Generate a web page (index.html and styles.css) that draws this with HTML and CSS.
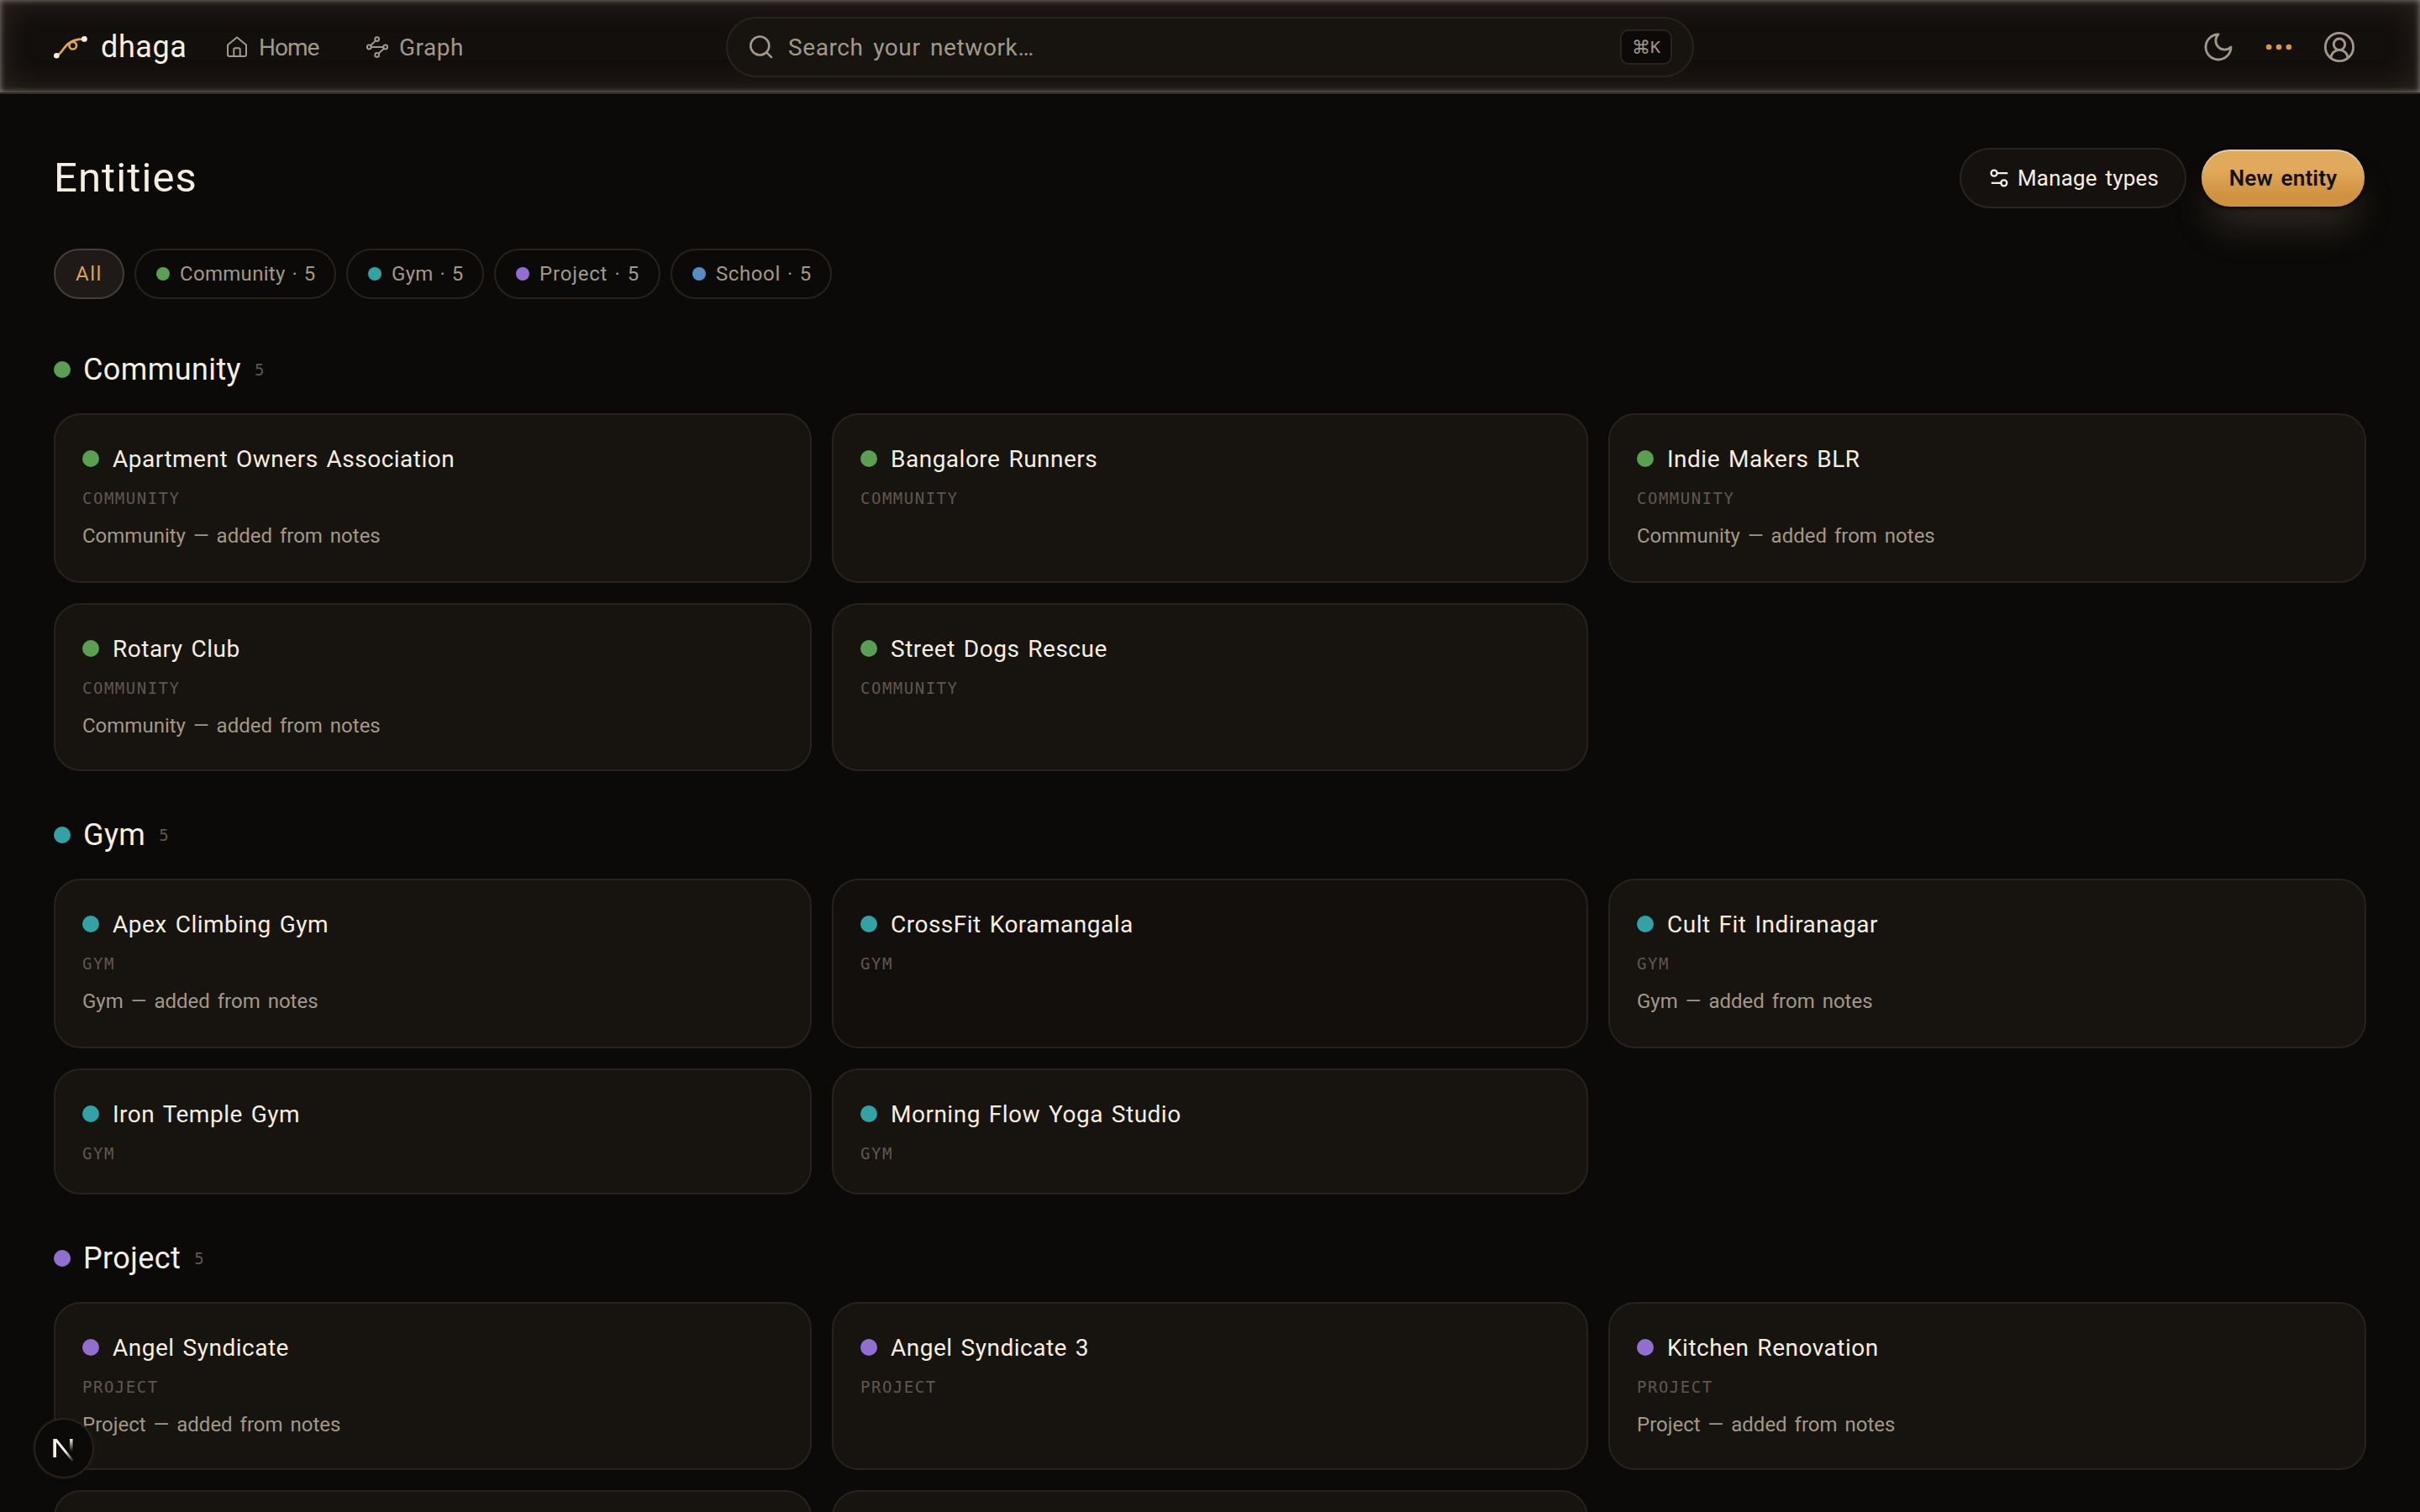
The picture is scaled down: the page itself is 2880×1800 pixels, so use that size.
FILE: index.html
```
<!DOCTYPE html>
<html lang="en">
<head>
    <meta charset="UTF-8">
    <meta name="viewport" content="width=device-width, initial-scale=1.0">
    <title>Entities | dhaga</title>
    <link rel="stylesheet" href="styles.css">
</head>
<body>
    <!-- Top bar -->
    <header class="topbar">
        <div class="topbar-left">
            <a class="brand" href="#">
                <svg class="brand-mark" viewBox="0 0 40 28" fill="none">
                    <path d="M4 24C12 21 12 5 34 4.6" stroke="#e0a552" stroke-width="2.7"/>
                    <circle cx="22.7" cy="12.2" r="4.3" stroke="#e0a552" stroke-width="2.7"/>
                    <circle cx="3.3" cy="24.3" r="3.3" fill="#f5eee1"/>
                    <circle cx="36.4" cy="4.4" r="3.4" fill="#f5eee1"/>
                </svg>
                <span>dhaga</span>
            </a>
            <nav>
                <a class="nav-home" href="#">
                    <svg class="icon-nav" viewBox="0 0 28 28">
                        <path d="M3 11.5 14 2.5l11 9V23a2 2 0 0 1-2 2H5a2 2 0 0 1-2-2Z"/>
                        <path d="M10.3 25V17a1.8 1.8 0 0 1 1.8-1.8h3.8A1.8 1.8 0 0 1 17.7 17v8"/>
                    </svg>
                    <span>Home</span>
                </a>
                <a class="nav-graph" href="#">
                    <svg class="icon-nav" viewBox="0 0 28 28">
                        <circle cx="13.7" cy="4.6" r="2.4"/>
                        <circle cx="4.3" cy="14" r="2.4"/>
                        <circle cx="23.7" cy="14" r="2.4"/>
                        <circle cx="13.7" cy="23.4" r="2.4"/>
                        <path d="M12 6.4 6 12.2M6.7 14h14.6M22 15.8l-6.5 5.9"/>
                    </svg>
                    <span>Graph</span>
                </a>
            </nav>
        </div>

        <div class="search">
            <svg class="icon-search" viewBox="0 0 32 32">
                <circle cx="14.3" cy="14.5" r="11"/>
                <path d="m22.5 22.7 5.5 5.5"/>
            </svg>
            <span class="search-text">Search your network…</span>
            <kbd><span class="cmd">⌘</span>K</kbd>
        </div>

        <div class="topbar-right">
            <button class="icon-btn" aria-label="Theme">
                <svg viewBox="0 0 24 24"><path d="M12 3a6 6 0 0 0 9 9 9 9 0 1 1-9-9Z"/></svg>
            </button>
            <button class="icon-btn more" aria-label="More">
                <svg viewBox="0 0 24 24"><circle cx="4.9" cy="12" r="2"/><circle cx="12" cy="12" r="2"/><circle cx="19.1" cy="12" r="2"/></svg>
            </button>
            <button class="icon-btn" aria-label="Account">
                <svg viewBox="0 0 24 24"><path d="M18 20a6 6 0 0 0-12 0"/><circle cx="12" cy="10" r="4"/><circle cx="12" cy="12" r="10"/></svg>
            </button>
        </div>
    </header>

    <main>
        <div class="page-head">
            <h1>Entities</h1>
            <div class="actions">
                <button class="btn-manage">
                    <svg viewBox="0 0 24 24"><path d="M20 7h-9M14 17H5"/><circle cx="17" cy="17" r="3"/><circle cx="7" cy="7" r="3"/></svg>
                    <span>Manage types</span>
                </button>
                <button class="btn-new">New entity</button>
            </div>
        </div>

        <!-- Type filters -->
        <div class="chips">
            <button class="chip active">All</button>
            <button class="chip chip-community"><i class="dot green"></i>Community · 5</button>
            <button class="chip chip-gym"><i class="dot teal"></i>Gym · 5</button>
            <button class="chip chip-project"><i class="dot purple"></i>Project · 5</button>
            <button class="chip chip-school"><i class="dot blue"></i>School · 5</button>
        </div>

        <section>
            <div class="section-head"><i class="dot green"></i><h2>Community</h2><span class="count">5</span></div>
            <div class="grid grid-community">
                <article class="card">
                    <h3><i class="dot green"></i>Apartment Owners Association</h3>
                    <div class="type">Community</div>
                    <p>Community — added from notes</p>
                </article>
                <article class="card">
                    <h3><i class="dot green"></i>Bangalore Runners</h3>
                    <div class="type">Community</div>
                </article>
                <article class="card">
                    <h3><i class="dot green"></i>Indie Makers BLR</h3>
                    <div class="type">Community</div>
                    <p>Community — added from notes</p>
                </article>
                <article class="card">
                    <h3><i class="dot green"></i>Rotary Club</h3>
                    <div class="type">Community</div>
                    <p>Community — added from notes</p>
                </article>
                <article class="card">
                    <h3><i class="dot green"></i>Street Dogs Rescue</h3>
                    <div class="type">Community</div>
                </article>
            </div>
        </section>

        <section>
            <div class="section-head"><i class="dot teal"></i><h2>Gym</h2><span class="count">5</span></div>
            <div class="grid grid-gym">
                <article class="card">
                    <h3><i class="dot teal"></i>Apex Climbing Gym</h3>
                    <div class="type">Gym</div>
                    <p>Gym — added from notes</p>
                </article>
                <article class="card dim">
                    <h3><i class="dot teal"></i>CrossFit Koramangala</h3>
                    <div class="type">Gym</div>
                </article>
                <article class="card">
                    <h3><i class="dot teal"></i>Cult Fit Indiranagar</h3>
                    <div class="type">Gym</div>
                    <p>Gym — added from notes</p>
                </article>
                <article class="card">
                    <h3><i class="dot teal"></i>Iron Temple Gym</h3>
                    <div class="type">Gym</div>
                </article>
                <article class="card">
                    <h3><i class="dot teal"></i>Morning Flow Yoga Studio</h3>
                    <div class="type">Gym</div>
                </article>
            </div>
        </section>

        <section>
            <div class="section-head"><i class="dot purple"></i><h2>Project</h2><span class="count">5</span></div>
            <div class="grid grid-project">
                <article class="card">
                    <h3><i class="dot purple"></i>Angel Syndicate</h3>
                    <div class="type">Project</div>
                    <p>Project — added from notes</p>
                </article>
                <article class="card">
                    <h3><i class="dot purple"></i>Angel Syndicate 3</h3>
                    <div class="type">Project</div>
                </article>
                <article class="card">
                    <h3><i class="dot purple"></i>Kitchen Renovation</h3>
                    <div class="type">Project</div>
                    <p>Project — added from notes</p>
                </article>
                <article class="card"></article>
                <article class="card"></article>
            </div>
        </section>
    </main>

    <!-- Dev tools badge -->
    <div class="dev-badge">
        <svg viewBox="0 0 72 72" fill="none">
            <defs>
                <linearGradient id="fadeBar" x1="0" y1="25" x2="0" y2="40" gradientUnits="userSpaceOnUse">
                    <stop offset="0" stop-color="#f5eee1"/>
                    <stop offset="1" stop-color="#f5eee1" stop-opacity="0"/>
                </linearGradient>
                <linearGradient id="fadeLeg" x1="38" y1="40" x2="48" y2="52" gradientUnits="userSpaceOnUse">
                    <stop offset="0" stop-color="#f5eee1"/>
                    <stop offset="1" stop-color="#f5eee1" stop-opacity="0"/>
                </linearGradient>
            </defs>
            <path d="M23.3 25h4.4L48 50.5l-2.5 1.2L27 29v18h-3.7Z" fill="url(#fadeLeg)"/>
            <path d="M43 25h3.6v15H43Z" fill="url(#fadeBar)"/>
        </svg>
    </div>
</body>
</html>
```
FILE: styles.css
```
/* General Styling */
* {
    box-sizing: border-box;
}

body {
    margin: 0;
    height: 1800px;
    overflow: hidden;
    background: #0b0a08;
    color: #f5eee1;
    font-family: Roboto, 'Liberation Sans', sans-serif;
    font-size: 28px;
}

a {
    color: inherit;
    text-decoration: none;
}

button {
    font-family: inherit;
    cursor: pointer;
}

h1, h2, h3, p {
    margin: 0;
}

svg {
    display: block;
    flex: none;
}

/* Top bar */
.topbar {
    display: grid;
    grid-template-columns: 1fr 1152px 1fr;
    align-items: center;
    height: 112px;
    padding: 2px 64px 0;
    background: #130f0d;
    border-bottom: 2px solid #2f2820;
    box-shadow: inset 0 0 7px rgba(210, 200, 195, 0.6), inset 0 0 36px rgba(100, 88, 72, 0.4);
}

.topbar-left,
.topbar-right,
.brand,
nav,
nav a {
    display: flex;
    align-items: center;
}

.brand {
    gap: 16px;
    font-size: 36px;
    font-weight: 450;
}

.brand span {
    width: 102px;
    letter-spacing: 0.6px;
}

.brand-mark {
    width: 40px;
    height: 28px;
}

nav {
    margin-left: 46px;
    color: #a2988a;
}

nav a {
    gap: 12px;
}

.nav-home span {
    width: 73px;
    letter-spacing: -1px;
}

.nav-graph {
    margin-left: 54px;
}

.nav-graph span {
    letter-spacing: 0.5px;
}

.icon-nav {
    width: 28px;
    height: 28px;
    fill: none;
    stroke: currentColor;
    stroke-width: 2;
    stroke-linejoin: round;
}

.search {
    display: flex;
    align-items: center;
    height: 72px;
    padding: 0 24px;
    background: #17130e;
    border: 2px solid #29231c;
    border-radius: 36px;
    color: #a2988a;
}

.icon-search {
    width: 32px;
    height: 32px;
    margin-right: 16px;
    fill: none;
    stroke: currentColor;
    stroke-width: 2.6;
    stroke-linecap: round;
}

.search-text {
    flex: 1;
    letter-spacing: 0.6px;
    word-spacing: 4px;
}

kbd {
    display: flex;
    align-items: center;
    justify-content: center;
    width: 62px;
    height: 42px;
    background: #0b0a08;
    border: 2px solid #29231c;
    border-radius: 10px;
    font-family: 'DejaVu Sans Mono', monospace;
    font-size: 20px;
}

.cmd {
    font-family: 'DejaVu Sans', sans-serif;
    font-size: 22px;
}

.topbar-right {
    justify-content: flex-end;
    margin-right: -4px;
}

.icon-btn {
    display: grid;
    place-items: center;
    width: 72px;
    height: 72px;
    padding: 0;
    border: 0;
    background: none;
    color: #a2988a;
}

.icon-btn svg {
    width: 40px;
    height: 40px;
    fill: none;
    stroke: currentColor;
    stroke-width: 1.7;
    stroke-linejoin: round;
}

.icon-btn.more svg {
    fill: #d49a45;
    stroke: none;
}

/* Page head */
main {
    padding: 64px 64px 0;
}

.page-head {
    display: flex;
    justify-content: space-between;
    align-items: center;
    height: 72px;
}

h1 {
    padding-bottom: 2px;
    font-size: 49px;
    font-weight: 400;
    letter-spacing: 1.1px;
}

.actions {
    display: flex;
    align-items: center;
    gap: 18px;
    margin-right: 2px;
}

.btn-manage,
.btn-new {
    display: flex;
    align-items: center;
    justify-content: center;
    padding: 0;
    font-size: 26px;
    letter-spacing: 0.2px;
    word-spacing: 3px;
}

.btn-manage {
    gap: 8px;
    width: 270px;
    height: 72px;
    background: #15110e;
    border: 2px solid #2b241e;
    border-radius: 36px;
    color: #f5eee1;
    font-weight: 450;
}

.btn-manage svg {
    width: 28px;
    height: 28px;
    fill: none;
    stroke: currentColor;
    stroke-width: 2;
    stroke-linecap: round;
}

.btn-new {
    width: 194px;
    height: 68px;
    background: linear-gradient(#e0a95b 35%, #cf9240 80%);
    border: 0;
    border-radius: 34px;
    box-shadow: inset 0 2px 0 rgba(225, 218, 208, 0.7), 0 2px 4px #060504, 0 32px 44px -8px rgba(120, 100, 88, 0.33);
    color: #14110e;
    font-weight: 600;
}

/* Filters */
.chips {
    display: flex;
    gap: 12px;
    margin-top: 48px;
}

.chip {
    display: flex;
    align-items: center;
    height: 60px;
    padding: 0 24px;
    background: none;
    border: 2px solid #29221c;
    border-radius: 30px;
    color: #a2988a;
    font-size: 24px;
    letter-spacing: 0.3px;
    word-spacing: 1.5px;
    white-space: nowrap;
}

.chip .dot {
    width: 16px;
    height: 16px;
    margin-right: 12px;
}

.chip.active {
    justify-content: center;
    width: 84px;
    background: #1f1a17;
    border-color: #453e39;
    color: #dca252;
    letter-spacing: 1.5px;
}

.chip-community {
    width: 240px;
}

.chip-gym {
    width: 164px;
}

.chip-project {
    width: 198px;
    letter-spacing: 0.8px;
}

.chip-school {
    width: 192px;
    letter-spacing: 0.6px;
}

.dot {
    flex: none;
    width: 20px;
    height: 20px;
    border-radius: 50%;
}

.green {
    background: #5a9f52;
}

.teal {
    background: #33a2a5;
}

.purple {
    background: #906fd0;
}

.blue {
    background: #568ec4;
}

/* Sections */
section {
    margin-top: 52px;
}

.chips + section {
    margin-top: 60px;
}

.section-head {
    display: flex;
    align-items: center;
    height: 48px;
    margin-bottom: 28px;
}

h2 {
    margin: 0 16px 0 15px;
    font-size: 36px;
    font-weight: 400;
    letter-spacing: 0.4px;
}

.count,
.type {
    color: #5f5750;
    font-family: 'DejaVu Sans Mono', monospace;
    font-size: 19px;
}

.grid {
    display: grid;
    grid-template-columns: 902px 900px 902px;
    gap: 24px;
}

.grid-community {
    grid-template-rows: 202px 200px;
}

.grid-gym {
    grid-template-rows: 202px 150px;
}

.grid-project {
    grid-template-rows: 200px 200px;
}

.card {
    padding: 32px;
    background: #17130e;
    border: 2px solid #29221c;
    border-radius: 32px;
}

.card.dim {
    background: #130f0d;
}

.card h3 {
    display: flex;
    align-items: center;
    gap: 16px;
    height: 40px;
    font-size: 28px;
    font-weight: 450;
    letter-spacing: 0.5px;
    word-spacing: 2.5px;
}

.type {
    height: 30px;
    margin-top: 12px;
    line-height: 30px;
    letter-spacing: 1.5px;
    text-transform: uppercase;
}

.card p {
    margin-top: 12px;
    color: #a2988a;
    font-size: 24px;
    line-height: 36px;
    word-spacing: 3px;
}

/* Dev badge */
.dev-badge {
    position: fixed;
    left: 40px;
    bottom: 40px;
    width: 72px;
    height: 72px;
    background: #0b0a08;
    border-radius: 50%;
    box-shadow: inset 0 0 0 2px #29221c, 0 0 3px #29221c;
}
```
